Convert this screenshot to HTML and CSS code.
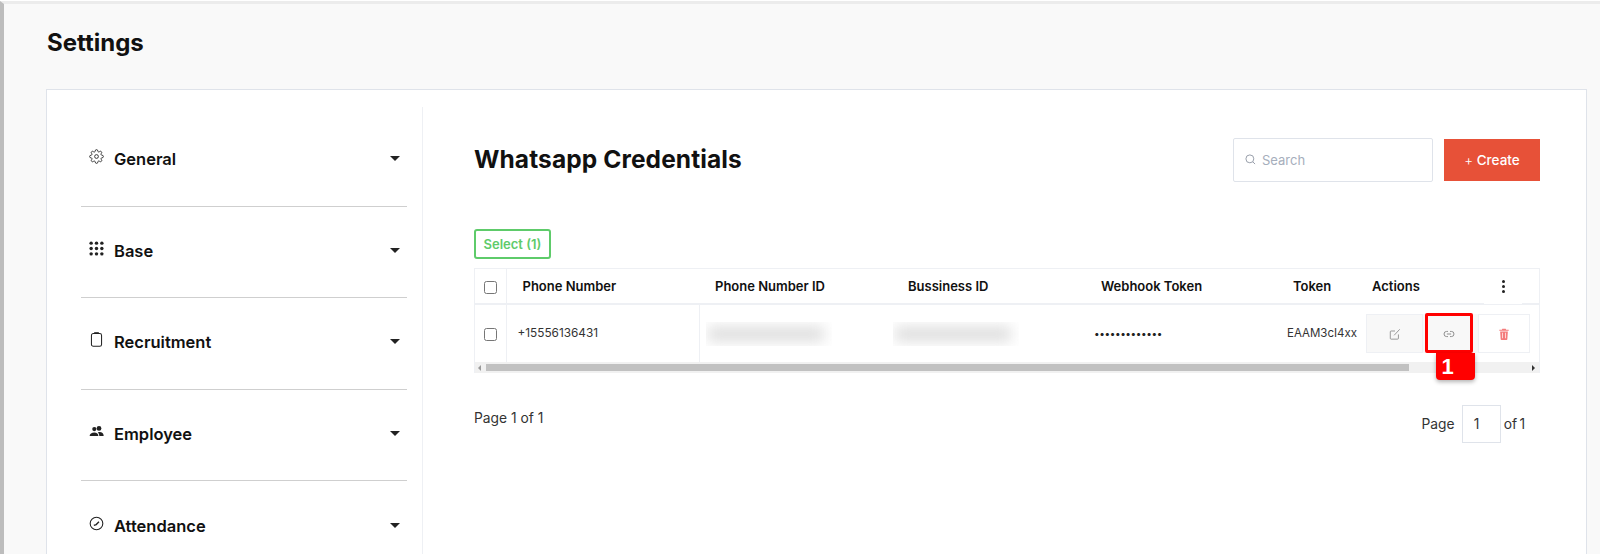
FILE: index.html
```html
<!DOCTYPE html>
<html lang="en">
<head>
  <meta charset="UTF-8">
  <meta name="viewport" content="width=device-width, initial-scale=1.0">
  <title>Settings</title>
  <link rel="stylesheet" href="styles.css">
</head>
<body>
  <div class="page">
    <h1 class="page-title">Settings</h1>

    <div class="card">
      <!-- Settings menu -->
      <nav class="sidebar">
        <div class="menu-row">
          <svg class="menu-icon" viewBox="0 0 24 24" fill="none" stroke="#222" stroke-width="1.4"><circle cx="12" cy="12" r="3"/><path d="M19.4 15a1.65 1.65 0 0 0 .33 1.82l.06.06a2 2 0 0 1 0 2.83 2 2 0 0 1-2.83 0l-.06-.06a1.65 1.65 0 0 0-1.82-.33 1.65 1.65 0 0 0-1 1.51V21a2 2 0 0 1-2 2 2 2 0 0 1-2-2v-.09A1.65 1.65 0 0 0 9 19.4a1.65 1.65 0 0 0-1.82.33l-.06.06a2 2 0 0 1-2.83 0 2 2 0 0 1 0-2.83l.06-.06a1.65 1.65 0 0 0 .33-1.82 1.65 1.65 0 0 0-1.51-1H3a2 2 0 0 1-2-2 2 2 0 0 1 2-2h.09A1.65 1.65 0 0 0 4.6 9a1.65 1.65 0 0 0-.33-1.82l-.06-.06a2 2 0 0 1 0-2.83 2 2 0 0 1 2.83 0l.06.06a1.65 1.65 0 0 0 1.82.33H9a1.65 1.65 0 0 0 1-1.51V3a2 2 0 0 1 2-2 2 2 0 0 1 2 2v.09a1.65 1.65 0 0 0 1 1.51 1.65 1.65 0 0 0 1.82-.33l.06-.06a2 2 0 0 1 2.83 0 2 2 0 0 1 0 2.83l-.06.06a1.65 1.65 0 0 0-.33 1.82V9a1.65 1.65 0 0 0 1.51 1H21a2 2 0 0 1 2 2 2 2 0 0 1-2 2h-.09a1.65 1.65 0 0 0-1.51 1z"/></svg>
          <span class="menu-label">General</span>
          <span class="caret"></span>
        </div>
        <div class="menu-row">
          <svg class="menu-icon" viewBox="0 0 14 14" fill="#222"><circle cx="2" cy="2" r="1.6"/><circle cx="7" cy="2" r="1.6"/><circle cx="12" cy="2" r="1.6"/><circle cx="2" cy="7" r="1.6"/><circle cx="7" cy="7" r="1.6"/><circle cx="12" cy="7" r="1.6"/><circle cx="2" cy="12" r="1.6"/><circle cx="7" cy="12" r="1.6"/><circle cx="12" cy="12" r="1.6"/></svg>
          <span class="menu-label">Base</span>
          <span class="caret"></span>
        </div>
        <div class="menu-row">
          <svg class="menu-icon" viewBox="0 0 14 16" fill="none" stroke="#222" stroke-width="1.1"><rect x="1.6" y="1.6" width="10.8" height="13.6" rx="2"/><path d="M4.5 1h5" stroke-width="1.6"/></svg>
          <span class="menu-label">Recruitment</span>
          <span class="caret"></span>
        </div>
        <div class="menu-row">
          <svg class="menu-icon" viewBox="0 0 24 24" fill="#222"><circle cx="8.5" cy="8" r="3.4"/><circle cx="16" cy="7" r="3.8"/><path d="M1 19c0-3.4 3.4-5.6 7.5-5.6s6.5 2.2 6.5 5.6z"/><path d="M16.5 19c0-2.4-.8-4.2-2.3-5.6 1-.4 1.8-.5 2.8-.5 3.7 0 6.5 2.3 6.5 6.1z"/></svg>
          <span class="menu-label">Employee</span>
          <span class="caret"></span>
        </div>
        <div class="menu-row">
          <svg class="menu-icon" viewBox="0 0 14 14" fill="none" stroke="#222"><circle cx="7" cy="7" r="5.9" stroke-width="1"/><path d="M4.5 8.8l2.2-.8 2.6-2.6" stroke-width="1.2"/></svg>
          <span class="menu-label">Attendance</span>
          <span class="caret"></span>
        </div>
      </nav>

      <main class="content">
        <div class="content-head">
          <h2 class="content-title">Whatsapp Credentials</h2>
          <div class="search-box">
            <svg class="search-icon" viewBox="0 0 12 12" fill="none" stroke="#8f96a3" stroke-width="1"><circle cx="5.3" cy="5.3" r="4.3"/><path d="M8.5 8.5L11 11"/></svg>
            <span class="search-text">Search</span>
          </div>
          <button class="create-btn"><span class="plus">+</span> Create</button>
        </div>

        <button class="select-btn">Select (1)</button>

        <div class="table-wrap">
          <table class="cred-table">
            <colgroup>
              <col class="col-check">
              <col class="col-wide">
              <col class="col-wide">
              <col class="col-wide">
              <col class="col-wide">
              <col class="col-token">
              <col>
            </colgroup>
            <thead>
              <tr>
                <th class="check-cell"><span class="checkbox"></span></th>
                <th>Phone Number</th>
                <th>Phone Number ID</th>
                <th>Bussiness ID</th>
                <th>Webhook Token</th>
                <th class="token-head">Token</th>
                <th class="actions-head">
                  <span>Actions</span>
                  <span class="kebab"><i></i><i></i><i></i></span>
                </th>
              </tr>
            </thead>
            <tbody>
              <tr>
                <td class="check-cell"><span class="checkbox"></span></td>
                <td class="line-right">+15556136431</td>
                <td class="blur-cell"><div class="blur-clip"><div class="blur-bar"></div></div></td>
                <td class="blur-cell biz"><div class="blur-clip"><div class="blur-bar"></div></div></td>
                <td class="dots">&bull;&bull;&bull;&bull;&bull;&bull;&bull;&bull;&bull;&bull;&bull;&bull;&bull;</td>
                <td class="token">EAAM3cI4xx</td>
                <td class="actions-cell">
                  <div class="actions">
                    <span class="act-btn act-edit">
                      <svg viewBox="0 0 14 14" fill="none" stroke="#8a8a8a" stroke-width="1"><path d="M11 7.5V12a1 1 0 0 1-1 1H2.5a1 1 0 0 1-1-1V4.5a1 1 0 0 1 1-1H7"/><path d="M6 8.5L12.5 1.5"/></svg>
                    </span>
                    <span class="act-btn act-link">
                      <svg viewBox="0 0 14 14" fill="none" stroke="#8a8a8a" stroke-width="1.1"><path d="M5.8 4H4.2a3 3 0 0 0 0 6h1.6"/><path d="M8.2 4h1.6a3 3 0 0 1 0 6H8.2"/><path d="M4.5 7h5"/></svg>
                      <span class="marker-box"></span>
                      <span class="marker-tag">1</span>
                    </span>
                    <span class="act-btn act-del">
                      <svg viewBox="0 0 14 14" fill="#f47c7c"><path d="M5 1h4l.5 1h3v1.3h-11V2h3z"/><path d="M2.5 4h9l-.6 9a1 1 0 0 1-1 .9H4.1a1 1 0 0 1-1-.9zM5 5.5V12h.8V5.5zm3.2 0V12H9V5.500z" fill-rule="evenodd"/></svg>
                    </span>
                  </div>
                </td>
              </tr>
            </tbody>
          </table>
          <div class="scrollbar">
            <span class="arrow arrow-left"></span>
            <span class="thumb"></span>
            <span class="arrow arrow-right"></span>
          </div>
        </div>

        <div class="pager-row">
          <span class="page-count">Page 1 of 1</span>
          <div class="pager">
            <span>Page</span>
            <span class="page-input">1</span>
            <span class="page-total">of 1</span>
          </div>
        </div>
      </main>
    </div>
  </div>
</body>
</html>
```

FILE: styles.css
```css
html, body {
  margin: 0;
  padding: 0;
  height: 100%;
  overflow: hidden;
}

body {
  background-color: #fff;
  font-family: 'Inter', 'Liberation Sans', sans-serif;
  color: #111;
}

.page {
  box-sizing: border-box;
  height: 553px;
  margin-top: 1px;
  padding: 0 13px 0 42px;
  background-color: #f9f9f9;
  border-top: 3px solid #ececec;
  border-left: 4px solid #bdbdbd;
  overflow: hidden;
}

.page-title {
  margin: 0 0 32px;
  padding: 25px 0 0 1px;
  height: 28px;
  line-height: 28px;
  font-size: 24px;
  font-weight: 700;
}

.card {
  display: flex;
  height: 500px;
  background-color: #fff;
  border: 1px solid #dfe3ea;
  padding-top: 17px;
  box-sizing: border-box;
}

/* sidebar */
.sidebar {
  box-sizing: border-box;
  width: 376px;
  flex: none;
  padding: 8px 15px 0 34px;
  border-right: 1px solid #eef0f4;
}

.menu-row {
  box-sizing: border-box;
  height: 91.5px;
  padding-bottom: 2px;
  display: flex;
  align-items: center;
  border-bottom: 1px solid #cfcfcf;
}

.menu-row:last-child {
  border-bottom: none;
}

.menu-icon {
  width: 15px;
  height: 15px;
  margin: -5px 10px 0 8px;
  flex: none;
}

.menu-label {
  flex: 1;
  font-size: 16.5px;
  font-weight: 600;
}

.caret {
  width: 0;
  height: 0;
  margin: -1px 7px 0 0;
  border-left: 5px solid transparent;
  border-right: 5px solid transparent;
  border-top: 5px solid #222;
}

/* main area */
.content {
  flex: 1;
  min-width: 0;
  padding: 31px 46px 0 51px;
}

.content-head {
  display: flex;
  align-items: center;
  height: 43px;
}

.content-title {
  flex: 1;
  margin: 0 0 2px;
  font-size: 24.5px;
  font-weight: 700;
  letter-spacing: 0.1px;
}

.search-box {
  box-sizing: border-box;
  width: 200px;
  height: 44px;
  display: flex;
  align-items: center;
  padding-left: 11px;
  border: 1px solid #dfe3ea;
  border-radius: 2px;
}

.search-icon {
  width: 11px;
  height: 11px;
  margin-right: 6px;
}

.search-text {
  font-size: 13px;
  color: #a6aebc;
}

.create-btn {
  width: 96px;
  height: 42px;
  margin-left: 11px;
  border: none;
  background-color: #e75138;
  color: #fff;
  font-family: inherit;
  font-size: 13.5px;
  font-weight: 500;
}

.plus {
  font-weight: 300;
}

.select-btn {
  display: block;
  box-sizing: border-box;
  width: 77px;
  height: 30px;
  margin: 48px 0 9px;
  padding: 0;
  background-color: #fff;
  border: 2px solid #5ecb6a;
  border-radius: 3px;
  color: #5ecb6a;
  font-family: inherit;
  font-size: 13px;
  font-weight: 600;
}

/* table */
.table-wrap {
  border: 1px solid #eef0f4;
  box-sizing: border-box;
  height: 105px;
}

.cred-table {
  width: 100%;
  table-layout: fixed;
  border-collapse: collapse;
}

.col-check { width: 31px; }
.col-wide { width: 193px; }
.col-token { width: 80px; }

.cred-table th {
  box-sizing: border-box;
  height: 35px;
  padding: 0 0 1px 16px;
  text-align: left;
  font-size: 13px;
  font-weight: 600;
  border-bottom: 2px solid #eef0f4;
}

.cred-table .token-head {
  padding-left: 15px;
}

.cred-table td {
  box-sizing: border-box;
  height: 58px;
  padding: 0 0 1px 11px;
  font-size: 11.8px;
  color: #333;
  white-space: nowrap;
  overflow: hidden;
}

.cred-table .check-cell {
  padding: 0;
  text-align: center;
  border-right: 1px solid #eef0f4;
}

.cred-table .line-right {
  border-right: 1px solid #eef0f4;
}

.checkbox {
  display: inline-block;
  vertical-align: middle;
  box-sizing: border-box;
  width: 13px;
  height: 13px;
  background-color: #fff;
  border: 1px solid #767676;
  border-radius: 2.5px;
}

.cred-table .blur-cell {
  padding: 0 0 0 6px;
}

.cred-table .blur-cell.biz {
  padding-left: 1px;
}

.blur-clip {
  width: 126px;
  height: 24px;
  overflow: hidden;
}

.blur-bar {
  width: 116px;
  height: 14px;
  margin: 5px 0 0 2px;
  background-color: #dcdcdc;
  filter: blur(7px);
}

.cred-table .dots {
  padding-left: 9px;
  color: #222;
  font-size: 10px;
  letter-spacing: -0.4px;
}

.cred-table .token {
  padding-left: 9px;
  overflow: visible;
  font-size: 11.5px;
}

.cred-table .actions-head {
  position: relative;
  padding-left: 14px;
}

.kebab {
  position: absolute;
  right: 17px;
  top: 0;
  width: 38px;
  height: 35px;
  background-color: #fff;
  display: flex;
  flex-direction: column;
  align-items: center;
  justify-content: center;
  gap: 2px;
}

.kebab i {
  width: 3px;
  height: 3px;
  border-radius: 50%;
  background-color: #222;
}

.cred-table .actions-cell {
  padding: 0 0 0 8px;
  overflow: visible;
}

.actions {
  display: flex;
  height: 39px;
}

.act-btn {
  box-sizing: border-box;
  display: flex;
  align-items: center;
  justify-content: center;
  height: 39px;
  position: relative;
  border: 1px solid #eef0f4;
}

.act-btn svg {
  width: 12px;
  height: 12px;
}

.act-edit {
  width: 57px;
  background-color: #f8f8f8;
}

.act-link {
  width: 55px;
  padding-right: 4px;
  background-color: #f8f8f8;
  border: none;
}

.act-del {
  width: 52px;
  background-color: #fff;
}

.marker-box {
  position: absolute;
  left: 2px;
  top: -1px;
  box-sizing: border-box;
  width: 48px;
  height: 40px;
  border: 3px solid #f00;
  border-radius: 2px;
}

.marker-tag {
  position: absolute;
  z-index: 2;
  left: 13px;
  top: 39px;
  box-sizing: border-box;
  width: 39px;
  height: 27px;
  padding-right: 16px;
  background-color: #f00;
  border-radius: 0 0 4px 4px;
  box-shadow: 0 2px 4px rgba(0, 0, 0, 0.3);
  color: #fff;
  font-family: 'Liberation Sans', sans-serif;
  font-size: 22px;
  font-weight: 700;
  line-height: 27px;
  text-align: center;
}

/* fake scrollbar */
.scrollbar {
  display: flex;
  align-items: center;
  height: 11px;
  background-color: #f1f1f1;
}

.thumb {
  width: 923px;
  height: 7px;
  margin-left: 5px;
  background-color: #c1c1c1;
}

.arrow {
  width: 0;
  height: 0;
  border-top: 3px solid transparent;
  border-bottom: 3px solid transparent;
}

.arrow-left {
  margin-left: 3px;
  border-right: 3px solid #9a9a9a;
}

.arrow-right {
  margin-left: auto;
  margin-right: 4px;
  border-left: 3px solid #333;
}

/* paging */
.pager-row {
  display: flex;
  justify-content: space-between;
  align-items: flex-start;
  margin-top: 32px;
  font-size: 13.8px;
  color: #333;
}

.page-count {
  padding-top: 5px;
}

.pager {
  display: flex;
  align-items: center;
  margin-right: 15px;
}

.page-input {
  box-sizing: border-box;
  width: 39px;
  height: 38px;
  margin: 0 3px 0 7px;
  line-height: 36px;
  padding-left: 11px;
  border: 1px solid #dfe3ea;
}

.page-total {
  word-spacing: -1.5px;
}
```
